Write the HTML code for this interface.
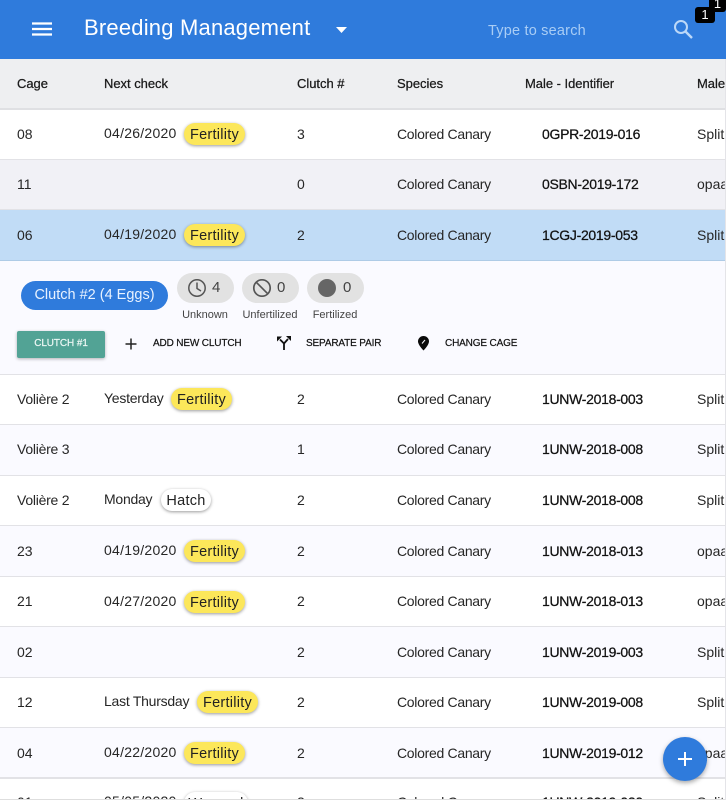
<!DOCTYPE html>
<html><head><meta charset="utf-8"><style>
html,body{margin:0;padding:0;width:726px;height:800px;overflow:hidden;background:#fff}
body{position:relative;font-family:"Liberation Sans",sans-serif;font-size:14px;color:#262626}
.a{position:absolute;white-space:nowrap}
.t{position:absolute;white-space:nowrap;line-height:16px}
.row{position:absolute;left:0;width:726px;border-bottom:1px solid #e2e2e6;box-sizing:border-box}
.p{position:absolute;height:22px;border-radius:11px;line-height:24px;text-align:center;color:#222;box-shadow:0 1px 3px rgba(0,0,0,.4);font-size:14.5px;letter-spacing:.25px}
.y{background:#fce75a}
.w{background:#fff}
.id{color:#111;letter-spacing:-.3px;-webkit-text-stroke:.25px #111}
.h{font-size:13px;color:#1a1a1a;-webkit-text-stroke:.25px #1a1a1a;top:76px;letter-spacing:-.03px}
.sp{letter-spacing:-.3px}
.n{letter-spacing:-.25px}
.g{position:absolute;top:273px;height:30px;width:57px;border-radius:15px;background:#e2e2e2}
.lb{font-size:11px;color:#444;top:308px;text-align:center;position:absolute;width:80px;line-height:14px}
.ac{font-size:10px;color:#111;top:337px;line-height:14px;position:absolute;letter-spacing:-.15px;-webkit-text-stroke:.2px #111;white-space:nowrap}
</style></head><body>

<div class="row" style="top:59px;height:51px;background:#eeeff1;border-bottom:2px solid #dfe0e3"></div>
<div class="row" style="top:110px;height:50px;background:#fff"></div>
<div class="row" style="top:160px;height:50px;background:#f1f1f6"></div>
<div class="row" style="top:210px;height:51px;background:#c1dcf6;border-bottom-color:#aecbe6"></div>
<div class="row" style="top:261px;height:114px;background:#fafaff"></div>
<div class="row" style="top:375px;height:50px;background:#fff"></div>
<div class="row" style="top:425px;height:51px;background:#fafaff"></div>
<div class="row" style="top:476px;height:50px;background:#fff"></div>
<div class="row" style="top:526px;height:51px;background:#fafaff"></div>
<div class="row" style="top:577px;height:50px;background:#fff"></div>
<div class="row" style="top:627px;height:51px;background:#fafaff"></div>
<div class="row" style="top:678px;height:50px;background:#fff"></div>
<div class="row" style="top:728px;height:51px;background:#fafaff;border-bottom:2px solid #e2e2e6"></div>
<div class="row" style="top:779px;height:21px;background:#fff;border:0"></div>

<div class="a" style="left:0;top:0;width:726px;height:59px;background:#2f7bdc"></div>
<svg class="a" style="left:32px;top:22px" width="20" height="14"><path d="M0 1.500H20M0 7H20M0 12.500H20" stroke="#fff" stroke-width="2.200"/></svg>
<div class="t" style="left:84px;top:15px;font-size:22px;line-height:26px;color:#fff;letter-spacing:.2px">Breeding Management</div>
<svg class="a" style="left:336px;top:27px" width="11" height="6"><path d="M0 0H11L5.500 6Z" fill="#fff"/></svg>
<div class="t" style="left:488px;top:23px;color:#a9cdf5;font-size:14.500px;letter-spacing:.2px">Type to search</div>
<svg class="a" style="left:673px;top:19px" width="21" height="21" fill="none" stroke="#bcd8f8" stroke-width="2"><circle cx="8" cy="8" r="6"/><path d="M12.500 12.500L19 19" stroke-width="2.400"/></svg>
<div class="a" style="left:695px;top:7px;width:20px;height:16px;background:#000;border-radius:3px;color:#fff;font-size:13px;line-height:16px;text-align:center">1</div>
<div class="a" style="left:709px;top:-4px;width:17px;height:16px;background:#000;border-radius:3px;color:#fff;font-size:13px;line-height:16px;text-align:center">1</div>

<div class="t h" style="left:17px">Cage</div>
<div class="t h" style="left:104px">Next check</div>
<div class="t h" style="left:297px">Clutch #</div>
<div class="t h" style="left:397px">Species</div>
<div class="t h" style="left:525px">Male - Identifier</div>
<div class="t h" style="left:697px">Male</div>

<!-- row 08 -->
<div class="t" style="left:17px;top:126px">08</div>
<div class="t" style="left:104px;top:125px;letter-spacing:.25px">04/26/2020</div>
<div class="p y" style="left:184px;top:123px;width:61px">Fertility</div>
<div class="t" style="left:297px;top:126px">3</div>
<div class="t sp" style="left:397px;top:126px">Colored Canary</div>
<div class="t id" style="left:542px;top:126px">0GPR-2019-016</div>
<div class="t" style="left:697px;top:126px">Split</div>

<!-- row 11 -->
<div class="t" style="left:17px;top:176px">11</div>
<div class="t" style="left:297px;top:176px">0</div>
<div class="t sp" style="left:397px;top:176px">Colored Canary</div>
<div class="t id" style="left:542px;top:176px">0SBN-2019-172</div>
<div class="t" style="left:697px;top:176px">opaa</div>

<!-- row 06 -->
<div class="t" style="left:17px;top:227px">06</div>
<div class="t" style="left:104px;top:226px;letter-spacing:.25px">04/19/2020</div>
<div class="p y" style="left:184px;top:224px;width:61px">Fertility</div>
<div class="t" style="left:297px;top:227px">2</div>
<div class="t sp" style="left:397px;top:227px">Colored Canary</div>
<div class="t id" style="left:542px;top:227px">1CGJ-2019-053</div>
<div class="t" style="left:697px;top:227px">Split</div>

<!-- expanded -->
<div class="a" style="left:21px;top:281px;width:147px;height:29px;border-radius:15px;background:#2f7bdc;color:#e8f2ff;font-size:14.500px;line-height:28px;text-align:center">Clutch #2 (4 Eggs)</div>
<div class="g" style="left:177px"></div>
<div class="g" style="left:242px"></div>
<div class="g" style="left:307px"></div>
<svg class="a" style="left:187px;top:278px" width="20" height="20" fill="none" stroke="#555" stroke-width="1.500"><circle cx="10" cy="10" r="8.200"/><path d="M10 4.500V10.500L14 13"/></svg>
<div class="t" style="left:212px;top:280px;font-size:15px;color:#444">4</div>
<svg class="a" style="left:252px;top:278px" width="20" height="20" fill="none" stroke="#555" stroke-width="1.700"><circle cx="10" cy="10" r="8.200"/><path d="M4.200 4.200L15.800 15.800"/></svg>
<div class="t" style="left:277px;top:280px;font-size:15px;color:#444">0</div>
<div class="a" style="left:318px;top:279px;width:18px;height:18px;border-radius:50%;background:#666"></div>
<div class="t" style="left:343px;top:280px;font-size:15px;color:#444">0</div>
<div class="lb" style="left:165px">Unknown</div>
<div class="lb" style="left:230px">Unfertilized</div>
<div class="lb" style="left:295px">Fertilized</div>

<div class="a" style="left:17px;top:331px;width:88px;height:27px;background:#52a395;border-radius:2px;box-shadow:0 1px 3px rgba(0,0,0,.3);color:#eef8f5;font-size:10px;line-height:26px;text-align:center;letter-spacing:-.1px;-webkit-text-stroke:.2px #eef8f5">CLUTCH #1</div>
<svg class="a" style="left:125px;top:338px" width="12" height="12"><path d="M6 0.500V11.500M0.500 6H11.500" stroke="#222" stroke-width="1.500"/></svg>
<div class="ac" style="left:153px">ADD NEW CLUTCH</div>
<svg class="a" style="left:277px;top:336px" width="14" height="14" fill="none" stroke="#111" stroke-width="1.800"><path d="M7 14V7.500L3 3.500M7 7.500L11 3"/><path d="M0 0.500H5L0 5.500Z M14 0V5L9 0Z" fill="#111" stroke="none"/></svg>
<div class="ac" style="left:306px">SEPARATE PAIR</div>
<svg class="a" style="left:418px;top:336px" width="11" height="15"><path d="M5.500 0C2.500 0 0 2.400 0 5.400C0 9 5.500 14.500 5.500 14.500S11 9 11 5.400C11 2.400 8.500 0 5.500 0Z" fill="#0a0a0a"/><path d="M4 7.500L7 4" stroke="#fafaff" stroke-width="1"/></svg>
<div class="ac" style="left:445px">CHANGE CAGE</div>

<!-- Volière 2 -->
<div class="t n" style="left:17px;top:391px">Volière 2</div>
<div class="t n" style="left:104px;top:390px">Yesterday</div>
<div class="p y" style="left:171px;top:388px;width:61px">Fertility</div>
<div class="t" style="left:297px;top:391px">2</div>
<div class="t sp" style="left:397px;top:391px">Colored Canary</div>
<div class="t id" style="left:542px;top:391px">1UNW-2018-003</div>
<div class="t" style="left:697px;top:391px">Split</div>

<!-- Volière 3 -->
<div class="t n" style="left:17px;top:441px">Volière 3</div>
<div class="t" style="left:297px;top:441px">1</div>
<div class="t sp" style="left:397px;top:441px">Colored Canary</div>
<div class="t id" style="left:542px;top:441px">1UNW-2018-008</div>
<div class="t" style="left:697px;top:441px">Split</div>

<!-- Volière 2 Hatch -->
<div class="t n" style="left:17px;top:492px">Volière 2</div>
<div class="t n" style="left:104px;top:491px">Monday</div>
<div class="p w" style="left:161px;top:489px;width:50px">Hatch</div>
<div class="t" style="left:297px;top:492px">2</div>
<div class="t sp" style="left:397px;top:492px">Colored Canary</div>
<div class="t id" style="left:542px;top:492px">1UNW-2018-008</div>
<div class="t" style="left:697px;top:492px">Split</div>

<!-- 23 -->
<div class="t" style="left:17px;top:543px">23</div>
<div class="t" style="left:104px;top:542px;letter-spacing:.25px">04/19/2020</div>
<div class="p y" style="left:184px;top:540px;width:61px">Fertility</div>
<div class="t" style="left:297px;top:543px">2</div>
<div class="t sp" style="left:397px;top:543px">Colored Canary</div>
<div class="t id" style="left:542px;top:543px">1UNW-2018-013</div>
<div class="t" style="left:697px;top:543px">opaa</div>

<!-- 21 -->
<div class="t" style="left:17px;top:593px">21</div>
<div class="t" style="left:104px;top:593px;letter-spacing:.25px">04/27/2020</div>
<div class="p y" style="left:184px;top:591px;width:61px">Fertility</div>
<div class="t" style="left:297px;top:593px">2</div>
<div class="t sp" style="left:397px;top:593px">Colored Canary</div>
<div class="t id" style="left:542px;top:593px">1UNW-2018-013</div>
<div class="t" style="left:697px;top:593px">opaa</div>

<!-- 02 -->
<div class="t" style="left:17px;top:644px">02</div>
<div class="t" style="left:297px;top:644px">2</div>
<div class="t sp" style="left:397px;top:644px">Colored Canary</div>
<div class="t id" style="left:542px;top:644px">1UNW-2019-003</div>
<div class="t" style="left:697px;top:644px">Split</div>

<!-- 12 -->
<div class="t" style="left:17px;top:694px">12</div>
<div class="t n" style="left:104px;top:693px">Last Thursday</div>
<div class="p y" style="left:197px;top:691px;width:61px">Fertility</div>
<div class="t" style="left:297px;top:694px">2</div>
<div class="t sp" style="left:397px;top:694px">Colored Canary</div>
<div class="t id" style="left:542px;top:694px">1UNW-2019-008</div>
<div class="t" style="left:697px;top:694px">Split</div>

<!-- 04 -->
<div class="t" style="left:17px;top:745px">04</div>
<div class="t" style="left:104px;top:744px;letter-spacing:.25px">04/22/2020</div>
<div class="p y" style="left:184px;top:742px;width:61px">Fertility</div>
<div class="t" style="left:297px;top:745px">2</div>
<div class="t sp" style="left:397px;top:745px">Colored Canary</div>
<div class="t id" style="left:542px;top:745px">1UNW-2019-012</div>
<div class="t" style="left:697px;top:745px">opaa</div>

<!-- partial last -->
<div class="t" style="left:17px;top:794px">01</div>
<div class="t" style="left:104px;top:793px;letter-spacing:.25px">05/05/2020</div>
<div class="p w" style="left:184px;top:792px;width:64px">Weaned</div>
<div class="t" style="left:297px;top:794px">2</div>
<div class="t sp" style="left:397px;top:794px">Colored Canary</div>
<div class="t id" style="left:542px;top:794px">1UNW-2019-020</div>
<div class="t" style="left:697px;top:794px">Split</div>

<div class="a" style="left:0;top:799px;width:726px;height:1px;background:#dedede"></div>
<div class="a" style="left:725px;top:59px;width:1px;height:741px;background:#e4e4e8"></div>

<div class="a" style="left:663px;top:737px;width:44px;height:44px;border-radius:50%;background:#2f7bdc;box-shadow:0 2px 5px rgba(0,0,0,.35)"></div>
<svg class="a" style="left:677px;top:751px" width="16" height="16"><path d="M8 1V15M1 8H15" stroke="#fff" stroke-width="2"/></svg>
</body></html>
